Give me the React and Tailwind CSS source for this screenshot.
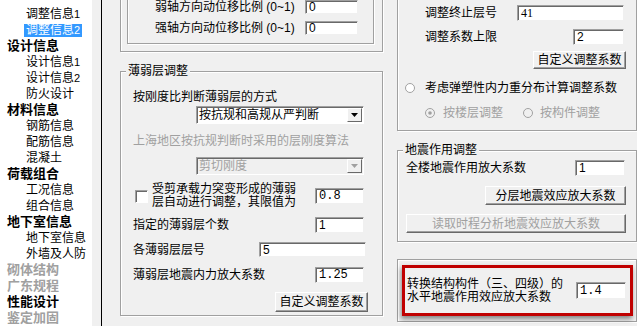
import React from "react";

const treeItems = [
  { label: "调整信息", num: "1" },
  { label: "调整信息", num: "2", selected: true },
  { label: "设计信息", head: true },
  { label: "设计信息", num: "1" },
  { label: "设计信息", num: "2" },
  { label: "防火设计" },
  { label: "材料信息", head: true },
  { label: "钢筋信息" },
  { label: "配筋信息" },
  { label: "混凝土" },
  { label: "荷载组合", head: true },
  { label: "工况信息" },
  { label: "组合信息" },
  { label: "地下室信息", head: true },
  { label: "地下室信息" },
  { label: "外墙及人防" },
  { label: "砌体结构", head: true, gray: true },
  { label: "广东规程", head: true, gray: true },
  { label: "性能设计", head: true },
  { label: "鉴定加固", head: true, gray: true },
];

const Tree = () => (
  <div className="w-[92px] shrink-0 bg-white pt-[6px]">
    {treeItems.map((it, i) => (
      <div
        key={i}
        className={`h-[16px] flex items-center ${it.head ? "pl-[7px]" : "pl-[24px]"}`}
      >
        {it.head ? (
          <span
            className={`text-[13px] leading-[14px] font-bold ${it.gray ? "text-[#a0a0a0]" : "text-black"}`}
          >
            {it.label}
          </span>
        ) : (
          <span
            className={`px-[2px] text-[12px] leading-[13px] ${it.selected ? "bg-[#3399ff] text-white" : "text-black"}`}
          >
            {it.label}
            {it.num && <span className="text-[11px]">{it.num}</span>}
          </span>
        )}
      </div>
    ))}
  </div>
);

const Input = ({ children, className = "" }) => (
  <div
    className={`bg-white border border-t-[#a0a0a0] border-l-[#a0a0a0] border-r-[#f0f0f0] border-b-[#f0f0f0] shadow-[inset_1px_1px_0_#696969] pl-[3px] flex items-center text-[12px] leading-none ${className}`}
  >
    {children}
  </div>
);

const Button = ({ children, className = "", disabled = false }) => (
  <div
    className={`bg-[#f0f0f0] border border-t-white border-l-white border-r-[#696969] border-b-[#696969] shadow-[inset_-1px_-1px_0_#a0a0a0] flex items-center justify-center whitespace-nowrap text-[12px] leading-none ${disabled ? "text-[#a0a0a0]" : "text-black"} ${className}`}
  >
    {children}
  </div>
);

const Arrow = ({ color }) => (
  <svg width="7" height="4" viewBox="0 0 7 4">
    <path d="M0 0h7L3.5 4z" fill={color} />
  </svg>
);

const Select = ({ children, disabled = false }) => (
  <div
    className={`self-end w-[168px] h-[18px] border border-t-[#a0a0a0] border-l-[#a0a0a0] border-r-white border-b-white shadow-[inset_1px_1px_0_#696969] flex items-stretch p-[1px] pl-[2px] ${disabled ? "bg-[#f0f0f0] text-[#a0a0a0]" : "bg-white text-black"}`}
  >
    <div className="flex-1 flex items-center text-[12px] leading-none">{children}</div>
    <div className="w-[15px] bg-[#f0f0f0] border border-t-white border-l-white border-r-[#696969] border-b-[#696969] flex items-center justify-center">
      <Arrow color={disabled ? "#a0a0a0" : "#000"} />
    </div>
  </div>
);

const Radio = ({ checked = false, disabled = false }) => (
  <svg width="10" height="10" viewBox="0 0 10 10" className="shrink-0">
    <circle cx="5" cy="5" r="4.5" fill={disabled ? "#f0f0f0" : "#fff"} stroke="#a0a0a0" />
    {checked && <circle cx="5" cy="5" r="1.8" fill={disabled ? "#a0a0a0" : "#000"} />}
  </svg>
);

const group = "border border-[#a0a0a0] shadow-[1px_1px_0_#fff,inset_1px_1px_0_#fff]";

const GroupLabel = ({ children }) => (
  <span className="absolute -top-[8px] left-[5px] px-[2px] bg-[#f0f0f0] text-[12px] leading-[14px]">
    {children}
  </span>
);

const LeftColumn = () => (
  <div className="w-[281px] shrink-0 pl-[18px] flex flex-col">
    <div className={`-mt-[48px] w-[263px] h-[100px] ${group} flex flex-col justify-end pb-[7px] pl-[6px]`}>
      <div className={`w-[247px] h-[80px] ${group} flex flex-col justify-end gap-[7px] pb-[8px]`}>
        <div className="h-[14px] flex items-center pl-[27px]">
          <span className="w-[150px] text-[12px] leading-[14px]">弱轴方向动位移比例 (0~1)</span>
          <Input className="w-[53px] h-[14px]">0</Input>
        </div>
        <div className="h-[14px] flex items-center pl-[27px]">
          <span className="w-[150px] text-[12px] leading-[14px]">强轴方向动位移比例 (0~1)</span>
          <Input className="w-[53px] h-[14px]">0</Input>
        </div>
      </div>
    </div>

    <div className={`relative mt-[19px] w-[263px] ${group} flex flex-col pl-[12px] pr-[18px] pb-[3px]`}>
      <GroupLabel>薄弱层调整</GroupLabel>
      <div className="mt-[18px] h-[14px] text-[12px] leading-[14px]">按刚度比判断薄弱层的方式</div>
      <div className="mt-[2px] flex flex-col">
        <Select>按抗规和高规从严判断</Select>
      </div>
      <div className="mt-[10px] h-[14px] text-[12px] leading-[14px] text-[#a0a0a0]">
        上海地区按抗规判断时采用的层刚度算法
      </div>
      <div className="mt-[9px] flex flex-col">
        <Select disabled>剪切刚度</Select>
      </div>
      <div className="mt-[8px] h-[26px] flex items-center">
        <div className="ml-[2px] w-[13px] h-[13px] bg-white border border-t-[#a0a0a0] border-l-[#a0a0a0] border-r-white border-b-white shadow-[inset_1px_1px_0_#696969]" />
        <div className="ml-[4px] w-[146px] text-[12px] leading-[13px]">受剪承载力突变形成的薄弱层自动进行调整，其限值为</div>
        <Input className="ml-auto w-[49px] h-[16px] font-['Liberation_Mono',monospace]">0.8</Input>
      </div>
      <div className="mt-[8px] h-[16px] flex items-center">
        <span className="text-[12px] leading-[14px]">指定的薄弱层个数</span>
        <Input className="ml-auto w-[49px] h-[16px]">1</Input>
      </div>
      <div className="mt-[9px] h-[15px] flex items-center">
        <span className="text-[12px] leading-[14px]">各薄弱层层号</span>
        <Input className="ml-auto -mr-[2px] w-[107px] h-[15px]">5</Input>
      </div>
      <div className="mt-[10px] h-[16px] flex items-center">
        <span className="text-[12px] leading-[14px]">薄弱层地震内力放大系数</span>
        <Input className="ml-auto w-[49px] h-[16px] font-['Liberation_Mono',monospace]">1.25</Input>
      </div>
      <Button className="mt-[9px] self-end -mr-[4px] w-[93px] h-[20px]">自定义调整系数</Button>
    </div>
  </div>
);

const RightColumn = () => (
  <div className="flex-1 pl-[14px] flex flex-col">
    <div className={`-mt-[20px] w-[240px] ${group} flex flex-col pl-[27px] pr-[12px] pb-[10px]`}>
      <div className="mt-[24px] h-[16px] flex items-center">
        <span className="text-[12px] leading-[14px]">调整终止层号</span>
        <Input className="ml-auto w-[107px] h-[16px] font-['Liberation_Serif',serif]">41</Input>
      </div>
      <div className="mt-[8px] h-[16px] flex items-center">
        <span className="text-[12px] leading-[14px]">调整系数上限</span>
        <Input className="ml-auto w-[51px] h-[16px]">2</Input>
      </div>
      <Button className="mt-[6px] self-end -mr-[2px] w-[93px] h-[18px]">自定义调整系数</Button>
      <div className="mt-[12px] h-[14px] -ml-[20px] flex items-center">
        <Radio />
        <span className="ml-[10px] text-[12px] leading-[14px]">考虑弹塑性内力重分布计算调整系数</span>
      </div>
      <div className="mt-[11px] h-[14px] flex items-center text-[#a0a0a0]">
        <Radio checked disabled />
        <span className="ml-[8px] text-[12px] leading-[14px]">按楼层调整</span>
        <span className="ml-[20px]">
          <Radio disabled />
        </span>
        <span className="ml-[7px] text-[12px] leading-[14px]">按构件调整</span>
      </div>
    </div>

    <div className={`relative mt-[19px] w-[240px] ${group} flex flex-col pl-[8px] pr-[11px] pb-[8px]`}>
      <GroupLabel>地震作用调整</GroupLabel>
      <div className="mt-[9px] h-[16px] flex items-center">
        <span className="text-[12px] leading-[14px]">全楼地震作用放大系数</span>
        <Input className="ml-auto w-[50px] h-[16px]">1</Input>
      </div>
      <Button className="mt-[10px] self-end -mr-[1px] w-[141px] h-[19px]">分层地震效应放大系数</Button>
      <Button disabled className="mt-[9px] self-end -mr-[1px] w-[220px] h-[19px]">
        读取时程分析地震效应放大系数
      </Button>
    </div>

    <div className={`mt-[17px] w-[240px] ${group} pl-[4px] pb-[5px] pt-[5px]`}>
      <div className="w-[231px] h-[51px] border-[3px] border-[#c00000] shadow-[-1px_3px_5px_rgba(0,0,0,0.45)] flex items-center pl-[2px] pr-[4px]">
        <div className="w-[158px] text-[12px] leading-[13px]">
          转换结构构件（三、四级）的
          <br />
          水平地震作用效应放大系数
        </div>
        <Input className="ml-auto w-[50px] h-[17px] font-['Liberation_Mono',monospace]">1.4</Input>
      </div>
    </div>
  </div>
);

export default function App() {
  return (
    <div className="w-[637px] h-[326px] overflow-hidden flex bg-[#f0f0f0] text-black font-['Liberation_Sans','Noto_Sans_CJK_SC',sans-serif]">
      <Tree />
      <div className="w-[10px] shrink-0 border-r border-black bg-[#f0f0f0]" />
      <div className="flex-1 flex overflow-hidden">
        <LeftColumn />
        <RightColumn />
      </div>
    </div>
  );
}
